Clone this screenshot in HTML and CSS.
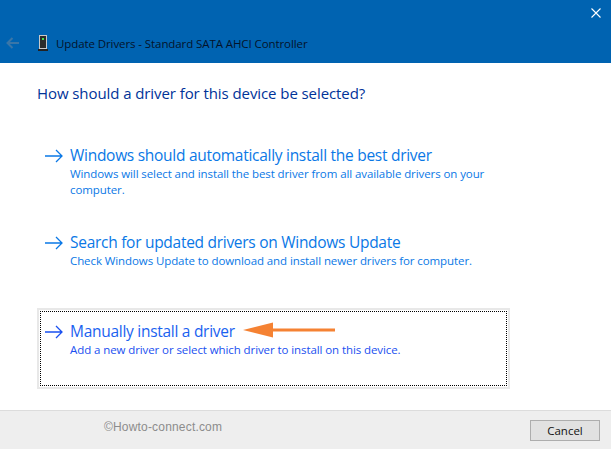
FILE: index.html
```html
<!DOCTYPE html>
<html lang="en">
<head>
  <meta charset="UTF-8">
  <title>Update Drivers</title>
  <link rel="stylesheet" href="styles.css">
</head>
<body>
  <div class="dialog">
    <div class="titlebar">
      <svg class="close-icon" width="10" height="10" viewBox="0 0 10 10"><path d="M0.5 0.5L9.5 9.5M9.5 0.5L0.5 9.5" stroke="#fff" stroke-width="1.1" fill="none"/></svg>
      <div class="title-row">
        <svg class="back-icon" width="14" height="12" viewBox="0 0 14 12"><path d="M6.5 1L1.5 6L6.5 11M1.5 6H13" stroke="#3a76a8" stroke-width="2" fill="none"/></svg>
        <svg class="device-icon" width="10" height="16" viewBox="0 0 10 16">
          <rect x="1" y="0" width="8" height="14" fill="#c9c9c9"/>
          <rect x="2" y="1" width="6" height="12" fill="#2b2b2b"/>
          <rect x="4" y="3" width="2" height="2" fill="#3fe04a"/>
          <rect x="0" y="14" width="10" height="2" fill="#222"/>
        </svg>
        <span class="title-text">Update Drivers - Standard SATA AHCI Controller</span>
      </div>
    </div>

    <div class="content">
      <h1 class="question">How should a driver for this device be selected?</h1>

      <div class="option option-first">
        <svg class="arrow" width="18" height="14" viewBox="0 0 18 14"><path d="M0 7H17M11 1L17 7L11 13" stroke="#0a78e6" stroke-width="1.3" fill="none"/></svg>
        <div class="option-text">
          <div class="option-title">Windows should automatically install the best driver</div>
          <div class="option-desc">Windows will select and install the best driver from all available drivers on your computer.</div>
        </div>
      </div>

      <div class="option option-second">
        <svg class="arrow" width="18" height="14" viewBox="0 0 18 14"><path d="M0 7H17M11 1L17 7L11 13" stroke="#0a78e6" stroke-width="1.3" fill="none"/></svg>
        <div class="option-text">
          <div class="option-title">Search for updated drivers on Windows Update</div>
          <div class="option-desc">Check Windows Update to download and install newer drivers for computer.</div>
        </div>
      </div>

      <div class="option-frame">
        <div class="option option-focus">
          <svg class="arrow" width="18" height="14" viewBox="0 0 18 14"><path d="M0 7H17M11 1L17 7L11 13" stroke="#1a50f0" stroke-width="1.3" fill="none"/></svg>
          <div class="option-text">
            <div class="option-title">Manually install a driver</div>
            <div class="option-desc">Add a new driver or select which driver to install on this device.</div>
          </div>
          <svg class="callout" width="92" height="16" viewBox="0 0 92 16"><path d="M0 8L30 0.5V6.5H92V9.5H30V15.5Z" fill="#f58233"/></svg>
        </div>
      </div>
    </div>

    <div class="footer">
      <span class="watermark">©Howto-connect.com</span>
      <button class="cancel">Cancel</button>
    </div>
  </div>
</body>
</html>
```

FILE: styles.css
```css
html, body {
  margin: 0;
  padding: 0;
}
body {
  font-family: "Open Sans", "Noto Sans", sans-serif;
  background: #fff;
}
.dialog {
  width: 611px;
  height: 449px;
  display: flex;
  flex-direction: column;
  overflow: hidden;
}
.titlebar {
  height: 63px;
  background-color: #0063b1;
  position: relative;
  display: flex;
  align-items: flex-end;
  flex-shrink: 0;
}
.close-icon {
  position: absolute;
  top: 8px;
  right: 10px;
}
.title-row {
  display: flex;
  align-items: center;
  height: 40px;
  padding-left: 6px;
}
.device-icon {
  margin-left: 18px;
  margin-right: 8px;
}
.title-text {
  font-size: 11.5px;
  color: #04132b;
  letter-spacing: -0.09px;
}
.content {
  flex: 1;
  padding: 20px 0 0 37px;
}
.question {
  font-size: 15px;
  font-weight: 400;
  line-height: 20px;
  margin: 0;
  color: #003399;
  letter-spacing: -0.08px;
}
.option {
  display: flex;
  align-items: flex-start;
  position: relative;
}
.option-first {
  margin: 41px 0 0 8px;
}
.option-second {
  margin: 33px 0 0 8px;
}
.arrow {
  margin-top: 5px;
  margin-right: 7px;
  flex-shrink: 0;
}
.option-text {
  width: 425px;
}
.option-title {
  font-size: 15.5px;
  line-height: 22px;
  color: #0a78e6;
  letter-spacing: -0.28px;
}
.option-desc {
  font-size: 11.5px;
  line-height: 16px;
  color: #0a78e6;
  letter-spacing: -0.09px;
}
.option-frame {
  width: 473px;
  height: 81px;
  box-sizing: border-box;
  margin-top: 39px;
  border: 2px solid #e8e8e8;
  padding: 1px;
}
.option-focus {
  height: 100%;
  box-sizing: border-box;
  border: 1px dotted #000;
  padding: 8px 0 0 4px;
}
.option-focus .option-title {
  color: #1a62f0;
}
.option-focus .option-desc {
  color: #1a50f0;
}
.callout {
  position: absolute;
  left: 202px;
  top: 10px;
}
.footer {
  height: 39px;
  flex-shrink: 0;
  box-sizing: border-box;
  background-color: #eeeeee;
  border-top: 1px solid #dcdcdc;
  display: flex;
  align-items: center;
  justify-content: space-between;
  padding: 0 11px 0 104px;
}
.watermark {
  font-family: "Liberation Sans", sans-serif;
  font-size: 12px;
  color: #8c8c8c;
  letter-spacing: 0.18px;
  margin-top: -6px;
}
.cancel {
  width: 70px;
  height: 21px;
  padding: 0;
  background-color: #e1e1e1;
  border: 1px solid #adadad;
  font-family: "Open Sans", sans-serif;
  font-size: 11.5px;
  color: #111;
}
```
